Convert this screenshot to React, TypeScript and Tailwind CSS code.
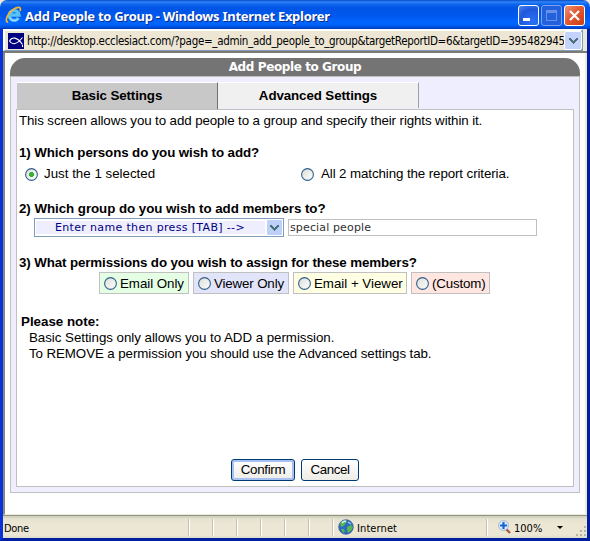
import React from 'react';

const ARIAL = "font-['Liberation_Sans',Arial,sans-serif]";
const TAHOMA = "font-['DejaVu_Sans_Condensed','DejaVu_Sans',sans-serif]";
const VERDANA = "font-['DejaVu_Sans',Verdana,sans-serif]";

function IELogo() {
  return (
    <svg width="18" height="18" viewBox="0 0 18 18" className="shrink-0">
      <path d="M13.4 11.9A4.900 4.900 0 1 1 14 9H6" fill="none" stroke="#58c3f6" strokeWidth="3.300" />
      <path d="M13.2 12.8A5 5 0 0 1 4.6 11.500" fill="none" stroke="#b4e6fc" strokeWidth="1" />
      <path d="M2.4 16.2C-.4 14 3 7 8.500 3.300C12.500 .6 16.500 .4 15.200 4.400" fill="none" stroke="#f2b535" strokeWidth="1.700" strokeLinecap="round" />
    </svg>
  );
}

function Chevron() {
  return (
    <svg width="9" height="7" viewBox="0 0 9 7" shapeRendering="crispEdges">
      <path d="M0 1h2v1h1v1h1v1h1v-1h1v-1h1v-1h2v2h-1v1h-1v1h-1v1h-1v1h-1v-1h-1v-1h-1v-1h-1v-1h-1z" fill="#4d7178" />
    </svg>
  );
}

function Radio({ checked = false }: { checked?: boolean }) {
  return (
    <svg width="13" height="13" viewBox="0 0 13 13" className="shrink-0">
      <defs>
        <linearGradient id="radioFill" x1="0" y1="0" x2="1" y2="1">
          <stop offset="0" stopColor="#dcdcd7" />
          <stop offset="1" stopColor="#ffffff" />
        </linearGradient>
      </defs>
      <circle cx="6.5" cy="6.5" r="5.9" fill="url(#radioFill)" stroke="#2f5f8c" strokeWidth="1.100" />
      {checked && <path d="M5 4h3v1h1v3h-1v1h-3v-1h-1v-3h1z" fill="#35b135" />}
    </svg>
  );
}

function Option({ label, box, text }: { label: string; box: string; text: string }) {
  return (
    <div className={`flex h-[22px] items-center border border-[#c0c0c0] pl-1 ${box}`}>
      <Radio />
      <span className={`ml-[3px] mt-[2px] whitespace-nowrap leading-4 ${text}`}>{label}</span>
    </div>
  );
}

function TitleBar() {
  return (
    <div className="flex h-[29px] shrink-0 items-center rounded-t-[7px] bg-[linear-gradient(to_bottom,#0a49c8_0px,#2f86f7_2px,#1067ee_4px,#0055e5_8px,#0058ee_16px,#0066ff_22px,#0062fa_25px,#0046cf_28px,#0038b4_29px)] pl-[5px] pr-[5px]">
      <IELogo />
      <span className="ml-[2px] mt-[3px] whitespace-nowrap font-['Noto_Sans','Open_Sans',sans-serif] text-[13px] font-bold leading-4 tracking-[-0.28px] text-white [text-shadow:1px_1px_0_#0a2c8a]">
        Add People to Group - Windows Internet Explorer
      </span>
      <div className="ml-auto mt-[2px] flex gap-[2px]">
        <div className="flex size-[21px] items-end rounded-[3px] border border-white bg-[radial-gradient(circle_at_70%_80%,#2a70f5,#2058dd_60%,#4f86ee)] pb-1 pl-1">
          <div className="h-[3px] w-[7px] bg-white" />
        </div>
        <div className="flex size-[21px] items-center justify-center rounded-[3px] border border-[#7da2ee] bg-[#2360dc]">
          <div className="h-[11px] w-[11px] border border-t-[3px] border-[#6790ea]" />
        </div>
        <div className="flex size-[21px] items-center justify-center rounded-[3px] border border-white bg-[linear-gradient(135deg,#ee9275,#e25a33_45%,#cf3c12)]">
          <svg width="13" height="13" viewBox="0 0 13 13">
            <path d="M2 2L11 11M11 2L2 11" stroke="#fff" strokeWidth="2.200" />
          </svg>
        </div>
      </div>
    </div>
  );
}

function AddressBar() {
  return (
    <div className="flex h-[24px] shrink-0 border-b-2 border-b-[#7c7a73] bg-[#ece9d8]">
      <div className="flex h-[22px] w-[580px] items-center border-2 border-b border-white border-b-[#7f9db9] border-r-[#7f9db9] bg-[#ede6d4] pl-[3px]">
        <svg width="16" height="16" viewBox="0 0 16 16" className="shrink-0">
          <rect width="16" height="16" fill="#000080" />
          <path d="M1.500 8C4 3.600 9 3.600 14.500 11.500M1.500 8C4 12.400 9 11.500 14.500 4.500" fill="none" stroke="#fff" strokeWidth="1.100" />
          <path d="M14.500 12v2" stroke="#fff" />
        </svg>
        <div className={`ml-[3px] w-[537px] shrink-0 overflow-hidden whitespace-nowrap text-[11.5px] leading-4 tracking-[-0.31px] text-black ${TAHOMA}`}>
          http://desktop.ecclesiact.com/?page=_admin_add_people_to_group&amp;targetReportID=6&amp;targetID=3954829458
        </div>
        <div className="flex h-[19px] w-[18px] shrink-0 items-center justify-center border border-white rounded-[2px] bg-[#c3d3fb]">
          <Chevron />
        </div>
      </div>
    </div>
  );
}

function Globe() {
  return (
    <svg width="16" height="16" viewBox="0 0 16 16">
      <circle cx="8" cy="8" r="7.300" fill="#2e69c5" stroke="#3a4f94" strokeWidth=".7" />
      <path d="M2 5C3 2 6 1 8 1L9 3L7 5L6 7L3 8ZM9 8L13 6L15 8L13 12L10 14L9 11ZM3 10L6 10L7 13L5 14Z" fill="#55b74c" />
      <path d="M4 4C5 2.500 6.500 2 8 2.300" stroke="#d5f0ff" strokeWidth="1.600" fill="none" />
      <path d="M10 3l3 2" stroke="#9ed0f4" strokeWidth="1.300" />
    </svg>
  );
}

function Divider() {
  return <div className="h-[17px] w-[2px] shrink-0 border-l border-[#c6c2ae] bg-white" />;
}

function StatusBar() {
  return (
    <div className={`flex h-[23px] shrink-0 items-center border-t border-[#8f9684] bg-[linear-gradient(to_bottom,#c9cbb9_0px,#e6e2d0_3px,#ece6d5_8px,#ece6d5_19px,#d9dcca_22px)] text-[11px] leading-4 text-black ${TAHOMA}`}>
      <span className="ml-px mt-[3px] w-[184px] shrink-0 tracking-[-0.3px]">Done</span>
      <div className="flex gap-[22px]">
        <Divider />
        <Divider />
        <Divider />
        <Divider />
        <Divider />
        <Divider />
        <Divider />
      </div>
      <div className="ml-[4px]"><Globe /></div>
      <span className="ml-[3px] mt-[3px] w-[129px] shrink-0 tracking-[0.1px]">Internet</span>
      <Divider />
      <svg width="13" height="14" viewBox="0 0 13 14" className="ml-[10px] shrink-0">
        <path d="M8 9l4 4" stroke="#a65c3c" strokeWidth="2.400" />
        <circle cx="5.500" cy="5.500" r="4.900" fill="#e4f1ff" stroke="#9cb3cf" />
        <path d="M5.500 2v7M2 5.500h7" stroke="#1763cf" strokeWidth="2.200" />
      </svg>
      <span className="ml-[3px] mt-[3px] w-[43px] shrink-0">100%</span>
      <svg width="6" height="3" viewBox="0 0 6 3" className="mt-px shrink-0"><path d="M0 0h6l-3 3z" fill="#000" /></svg>
      <svg width="11" height="11" viewBox="0 0 11 11" className="ml-auto mt-[9px] shrink-0" shapeRendering="crispEdges">
        <path d="M8 0h2v2h-2zM4 4h2v2h-2zM8 4h2v2h-2zM0 8h2v2h-2zM4 8h2v2h-2zM8 8h2v2h-2z" fill="#b8b4a2" />
      </svg>
    </div>
  );
}

function BasicSettings() {
  return (
    <div className="flex h-[378px] w-[558px] flex-col border border-[#c0c0c0] bg-white pl-[2px] text-[13.33px] leading-4 text-black">
      <p className="mt-[3px] whitespace-nowrap tracking-[-0.105px]">This screen allows you to add people to a group and specify their rights within it.</p>

      <h2 className="mt-4 font-bold tracking-[-0.1px]">1) Which persons do you wish to add?</h2>
      <div className="mt-[5px] flex h-4 items-center pl-[6px]">
        <Radio checked />
        <span className="ml-[6px] w-[257px]">Just the 1 selected</span>
        <Radio />
        <span className="ml-[7px] tracking-[-0.1px]">All 2 matching the report criteria.</span>
      </div>

      <h2 className="mt-[19px] font-bold tracking-[-0.05px]">2) Which group do you wish to add members to?</h2>
      <div className={`mt-px flex items-center pl-[15px] text-[11px] ${VERDANA}`}>
        <div className="flex h-[19px] w-[250px] items-center border border-[#7f9db9] bg-white pl-px pr-px text-[#000080]">
          <div className="h-[13px] w-[229px] whitespace-nowrap bg-[#eeeeff] pl-[19px] leading-[13px] tracking-[0.34px]">Enter name then press [TAB] --&gt;</div>
          <div className="ml-auto flex h-[15px] w-[15px] items-center justify-center rounded-[1px] bg-[#bdd0f8]">
            <Chevron />
          </div>
        </div>
        <div className="ml-[4px] h-[17px] w-[249px] border border-[#c0c0c0] pl-px leading-[16px] tracking-[0.14px] text-[#303030]">special people</div>
      </div>

      <h2 className="mt-[18px] font-bold tracking-[-0.11px]">3) What permissions do you wish to assign for these members?</h2>
      <div className="mt-px flex gap-1 pl-[80px]">
        <Option label="Email Only" box="w-[90px] bg-[#e4ffe4]" text="tracking-[-0.05px]" />
        <Option label="Viewer Only" box="w-[96px] bg-[#e2e4fa]" text="tracking-[-0.15px]" />
        <Option label="Email + Viewer" box="w-[114px] bg-[#ffffe4]" text="tracking-[-0.02px]" />
        <Option label="(Custom)" box="w-[79px] bg-[#ffe6e0]" text="tracking-[-0.15px]" />
      </div>

      <div className="mt-[20px] pl-[2px]">
        <h3 className="font-bold">Please note:</h3>
        <p className="pl-2 tracking-[-0.04px]">Basic Settings only allows you to ADD a permission.</p>
        <p className="pl-2 tracking-[-0.09px]">To REMOVE a permission you should use the Advanced settings tab.</p>
      </div>

      <div className="mt-[97px] flex gap-[6px] pl-[212px]">
        <button className="h-[22px] w-[64px] rounded-[3px] border border-[#003c74] bg-[linear-gradient(#fff,#edece6)] tracking-[-0.3px] shadow-[inset_0_0_0_2px_#a6c1f2]">Confirm</button>
        <button className="h-[22px] w-[58px] rounded-[3px] border border-[#003c74] bg-[linear-gradient(#fff,#edece6)] tracking-[-0.4px]">Cancel</button>
      </div>
    </div>
  );
}

export default function App() {
  return (
    <div className={`flex h-[541px] w-[590px] flex-col overflow-hidden bg-[#ece9d8] ${ARIAL}`}>
      <TitleBar />
      <div className="flex h-[512px] flex-col border-x-[3px] border-b-[3px] border-[#0831d9] border-b-[#001ea0] border-r-[#001ea0]">
        <AddressBar />
        <div className="h-[462px] border-b border-l-2 border-r-2 border-[#ece9d8] border-l-[#8a887e] bg-white pl-[5px] pt-[5px]">
          <div className="w-[570px]">
            <div className={`h-[18px] rounded-t-[15px] bg-[#747474] text-center text-[12px] font-bold leading-[19px] text-white ${VERDANA}`}>
              <span className="tracking-[-0.4px]">Add People to Group</span>
            </div>
            <div className="h-[417px] border border-[#c0c0c0] bg-[#eeeeff] pl-[5px] pt-[5px]">
              <div className="flex h-[27px] pl-px text-center text-[13.33px] font-bold leading-[25px] tracking-[-0.1px] text-black">
                <div className="h-[27px] w-[201px] border-r border-t border-r-[#707070] border-t-white bg-[#c8c8c8]">Basic Settings</div>
                <div className="h-[26px] w-[201px] border-r border-t border-r-[#a0a0a0] border-t-white bg-[#f0f0f0]">Advanced Settings</div>
              </div>
              <BasicSettings />
            </div>
          </div>
        </div>
        <StatusBar />
      </div>
    </div>
  );
}
